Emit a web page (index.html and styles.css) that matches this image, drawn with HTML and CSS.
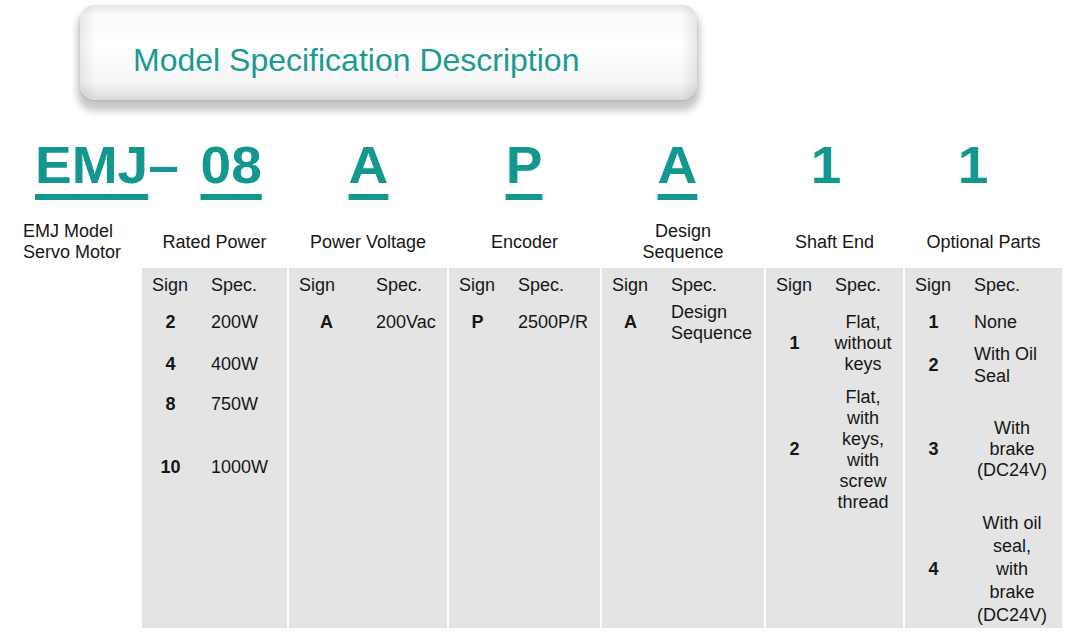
FILE: index.html
```html
<!DOCTYPE html>
<html>
<head>
<meta charset="utf-8">
<title>Model Specification Description</title>
<link rel="stylesheet" href="styles.css">
</head>
<body>
<header class="top">
  <div class="banner"><h1 class="title">Model Specification Description</h1></div>
</header>
<main class="spec">
  <div class="code code-lead"><span class="stretch"><span class="ul">EMJ</span>–<span class="gap"></span><span class="ul">08</span></span></div>
  <div class="code"><span class="stretch ul">A</span></div>
  <div class="code"><span class="stretch ul">P</span></div>
  <div class="code shift6"><span class="stretch ul">A</span></div>
  <div class="code shift8"><span class="stretch">1</span></div>
  <div class="code shift10"><span class="stretch">1</span></div>

  <div class="label label-first">EMJ Model<br>Servo Motor</div>
  <div class="label">Rated Power</div>
  <div class="label">Power Voltage</div>
  <div class="label">Encoder</div>
  <div class="label">Design<br>Sequence</div>
  <div class="label">Shaft End</div>
  <div class="label">Optional Parts</div>

  <div class="spacer"></div>

  <section class="panel">
    <div class="row head"><span class="sign-h">Sign</span><span class="spec-h">Spec.</span></div>
    <div class="row h39"><span class="sign">2</span><span class="val">200W</span></div>
    <div class="row h44"><span class="sign">4</span><span class="val">400W</span></div>
    <div class="row h37"><span class="sign">8</span><span class="val">750W</span></div>
    <div class="row h88"><span class="sign">10</span><span class="val">1000W</span></div>
  </section>

  <section class="panel wide-sign">
    <div class="row head"><span class="sign-h">Sign</span><span class="spec-h">Spec.</span></div>
    <div class="row h39"><span class="sign">A</span><span class="val">200Vac</span></div>
  </section>

  <section class="panel">
    <div class="row head"><span class="sign-h">Sign</span><span class="spec-h">Spec.</span></div>
    <div class="row h39"><span class="sign">P</span><span class="val">2500P/R</span></div>
  </section>

  <section class="panel">
    <div class="row head"><span class="sign-h">Sign</span><span class="spec-h">Spec.</span></div>
    <div class="row h39"><span class="sign">A</span><span class="val">Design<br>Sequence</span></div>
  </section>

  <section class="panel">
    <div class="row head"><span class="sign-h">Sign</span><span class="spec-h">Spec.</span></div>
    <div class="row h81"><span class="sign">1</span><span class="val center">Flat,<br>without<br>keys</span></div>
    <div class="row h131"><span class="sign">2</span><span class="val center">Flat,<br>with<br>keys,<br>with<br>screw<br>thread</span></div>
  </section>

  <section class="panel">
    <div class="row head"><span class="sign-h">Sign</span><span class="spec-h">Spec.</span></div>
    <div class="row h38"><span class="sign">1</span><span class="val">None</span></div>
    <div class="row h48"><span class="sign">2</span><span class="val lh22">With Oil<br>Seal</span></div>
    <div class="row h121"><span class="sign">3</span><span class="val center">With<br>brake<br>(DC24V)</span></div>
    <div class="row h118"><span class="sign">4</span><span class="val center lh23">With oil<br>seal,<br>with<br>brake<br>(DC24V)</span></div>
  </section>
</main>
</body>
</html>
```
FILE: styles.css
```css
* { box-sizing: border-box; }

html, body {
  margin: 0;
  padding: 0;
  background: #ffffff;
}

body {
  width: 1075px;
  height: 639px;
  overflow: hidden;
  font-family: "Liberation Sans", Arial, sans-serif;
  color: #161616;
}

.top {
  padding: 5px 0 0 80px;
  height: 118px;
}

.banner {
  width: 617px;
  height: 95px;
  border-radius: 15px;
  padding: 37px 0 0 53px;
  background:
    linear-gradient(to right, rgba(0,0,0,0.08) 0px, rgba(0,0,0,0) 16px, rgba(0,0,0,0) 601px, rgba(0,0,0,0.09) 617px),
    linear-gradient(to bottom, #e6e6e6 0%, #fafafa 10%, #ffffff 45%, #f6f6f6 82%, #dadada 100%);
  box-shadow: 0 8px 7px 3px rgba(0,0,0,0.22), 0 1px 2px rgba(0,0,0,0.12);
}

.title {
  margin: 0;
  font-weight: normal;
  font-size: 32px;
  line-height: 37px;
  color: #1b9a93;
  white-space: nowrap;
}

.spec {
  display: grid;
  grid-template-columns: 140px 145px 158px 151px 162px 137px 157px;
  grid-template-rows: 92px 58px 360px;
  column-gap: 2px;
}

/* code letters */
.code {
  padding-top: 23px;
  font-size: 51px;
  line-height: 50px;
  font-weight: bold;
  color: #14978f;
  text-align: center;
  white-space: nowrap;
}

.code-lead {
  grid-column: 1 / 3;
  text-align: left;
  padding-left: 35px;
}

.stretch {
  display: inline-block;
  transform: scaleX(1.08);
}

.code-lead .stretch { transform-origin: left center; }

.ul {
  text-decoration: underline;
  text-decoration-thickness: 6px;
  text-underline-offset: 11px;
  text-decoration-skip-ink: none;
}

.gap {
  display: inline-block;
  width: 20px;
}

.shift6 { padding-right: 12px; }
.shift8 { padding-right: 16px; }
.shift10 { padding-right: 20px; }

/* labels */
.label {
  display: flex;
  align-items: center;
  justify-content: center;
  text-align: center;
  padding-top: 6px;
  font-size: 18px;
  line-height: 21px;
}

.label-first {
  justify-content: flex-start;
  text-align: left;
  padding-left: 23px;
}

.spacer { grid-column: 1; }

/* panels */
.panel {
  background: #e4e4e4;
  font-size: 18px;
  line-height: 21px;
  --sign-w: 57px;
}

.wide-sign { --sign-w: 75px; }

.row {
  display: flex;
  align-items: center;
}

.head { height: 35px; }
.h37 { height: 37px; }
.h38 { height: 38px; }
.h39 { height: 39px; }
.h44 { height: 44px; }
.h48 { height: 48px; }
.h81 { height: 81px; }
.h88 { height: 88px; }
.h118 { height: 118px; }
.h121 { height: 121px; }
.h131 { height: 131px; }

.sign-h {
  width: var(--sign-w);
  padding-left: 10px;
  flex: none;
}

.spec-h {
  padding-left: 12px;
}

.sign {
  width: var(--sign-w);
  flex: none;
  text-align: center;
  font-weight: bold;
}

.val {
  flex: 1;
  padding-left: 12px;
}

.val.center {
  padding-left: 0;
  text-align: center;
}

.lh22 { line-height: 22px; }
.lh23 { line-height: 23px; }
```
